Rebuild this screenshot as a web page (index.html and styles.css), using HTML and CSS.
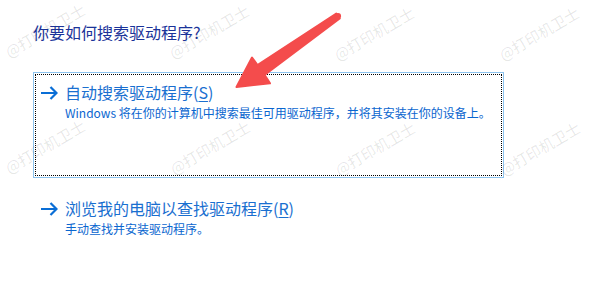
FILE: index.html
```html
<!DOCTYPE html>
<html lang="zh-CN">
<head>
<meta charset="utf-8">
<link rel="stylesheet" href="styles.css">
</head>
<body>
<div class="page">
  <h1 class="title">你要如何搜索驱动程序?</h1>
  <div class="option option-focused">
    <div class="option-inner">
      <div class="option-head">
        <svg class="link-arrow" width="18" height="14" viewBox="0 0 18 14"><path d="M1 7H16.5M10.5 1L16.5 7L10.5 13" fill="none" stroke="#0a6ed6" stroke-width="2.2"/></svg>
        <span class="option-title">自动搜索驱动程序(<u>S</u>)</span>
      </div>
      <div class="option-desc">Windows 将在你的计算机中搜索最佳可用驱动程序，并将其安装在你的设备上。</div>
    </div>
  </div>
  <div class="option">
    <div class="option-inner">
      <div class="option-head">
        <svg class="link-arrow" width="18" height="14" viewBox="0 0 18 14"><path d="M1 7H16.5M10.5 1L16.5 7L10.5 13" fill="none" stroke="#0a6ed6" stroke-width="2.2"/></svg>
        <span class="option-title">浏览我的电脑以查找驱动程序(<u>R</u>)</span>
      </div>
      <div class="option-desc">手动查找并安装驱动程序。</div>
    </div>
  </div>
</div>

<div class="watermarks">
  <span class="wm" style="left:10px;top:44px">@打印机卫士</span>
  <span class="wm" style="left:174px;top:45px">@打印机卫士</span>
  <span class="wm" style="left:339px;top:47px">@打印机卫士</span>
  <span class="wm" style="left:504px;top:47px">@打印机卫士</span>
  <span class="wm" style="left:10px;top:160px">@打印机卫士</span>
  <span class="wm" style="left:175px;top:161px">@打印机卫士</span>
  <span class="wm" style="left:340px;top:162px">@打印机卫士</span>
  <span class="wm" style="left:505px;top:162px">@打印机卫士</span>
</div>

<svg class="red-arrow" width="600" height="300" viewBox="0 0 600 300">
  <path d="M336.3 13.5 L257.5 65.1 L252 57.5 L236.5 87 L270 83.3 L264.5 74.9 L339.7 18.5 Z" fill="#f44c4c" stroke="#f44c4c" stroke-width="2" stroke-linejoin="round"/>
  <circle cx="338" cy="16" r="3.1" fill="#f44c4c"/>
</svg>
</body>
</html>
```

FILE: styles.css
```css
html, body {
  margin: 0;
  padding: 0;
  background: #ffffff;
}

body {
  width: 600px;
  height: 300px;
  overflow: hidden;
  position: relative;
  font-family: "Noto Sans CJK SC", "Noto Sans", sans-serif;
}

.page {
  padding: 22px 0 0 33px;
}

.title {
  margin: 0;
  font-size: 16px;
  line-height: 20px;
  font-weight: normal;
  color: #1a3399;
}

.option {
  box-sizing: border-box;
  width: 471px;
  height: 106px;
  margin-top: 30px;
  border: 1px solid transparent;
  padding: 1px;
}

.option + .option {
  margin-top: 10px;
}

.option-focused {
  border-color: #8cc3ee;
}

.option-inner {
  box-sizing: border-box;
  height: 100%;
  border: 1px solid transparent;
  padding: 7px 0 0 4px;
}

.option-focused .option-inner {
  border: 1px dotted #000000;
}

.option-head {
  display: flex;
  align-items: center;
  gap: 7px;
  height: 20px;
}

.link-arrow {
  flex: none;
  display: block;
  margin-top: 2px;
}

.option-title {
  font-size: 16px;
  line-height: 20px;
  color: #1a6fd0;
  white-space: nowrap;
}

.option-title u {
  text-underline-offset: 2px;
}

.option-desc {
  margin-top: 3px;
  padding-left: 25px;
  font-size: 12px;
  line-height: 16px;
  color: #0a66cf;
  white-space: nowrap;
}

.watermarks {
  position: absolute;
  left: 0;
  top: 0;
  width: 600px;
  height: 300px;
  pointer-events: none;
}

.wm {
  position: absolute;
  font-size: 15px;
  line-height: 15px;
  color: rgba(0, 0, 0, 0.1);
  white-space: nowrap;
  transform: rotate(-30deg);
  transform-origin: 0 100%;
}

.red-arrow {
  position: absolute;
  left: 0;
  top: 0;
  pointer-events: none;
}
```
